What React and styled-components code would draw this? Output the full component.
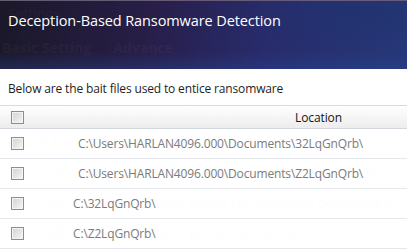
import React from "react";
import styled, { createGlobalStyle } from "styled-components";

const GlobalStyle = createGlobalStyle`
  html, body {
    margin: 0;
    padding: 0;
    background: #ffffff;
    overflow: hidden;
  }
  body {
    font-family: "Open Sans", "Noto Sans", sans-serif;
  }
`;

const baitFiles = [
  { path: "C:\\Users\\HARLAN4096.000\\Documents\\32LqGnQrb\\", indent: 54 },
  { path: "C:\\Users\\HARLAN4096.000\\Documents\\Z2LqGnQrb\\", indent: 54 },
  { path: "C:\\32LqGnQrb\\", indent: 49 },
  { path: "C:\\Z2LqGnQrb\\", indent: 49 },
];

const settings = [
  { label: "Enable advanced malware detection", extra: "Exclusions", extraAt: 300 },
  { section: "Anti-Ransomware Settings" },
  { label: "Enable behavioral-based ransomware detection" },
  { label: "Enable deception-based ransomware detection", extra: "Set up", extraAt: 350 },
  { label: "Enable document protection", extra: "Set up", extraAt: 260 },
];

/* ---------- settings window behind the dialog ---------- */

const Stage = styled.div`
  position: relative;
  width: 407px;
  height: 252px;
  overflow: hidden;
`;

const BackWindow = styled.div`
  display: flex;
  flex-direction: column;
  height: 100%;
`;

const BackHeader = styled.div`
  height: 69px;
  box-sizing: border-box;
  padding: 4px 2px 0;
  background: #1d1a2c;
  color: rgba(255, 255, 255, 0.7);
  display: flex;
  flex-direction: column;
  gap: 14px;
`;

const BackTitle = styled.div`
  padding-left: 6px;
  font-size: 14px;
  line-height: 20px;
`;

const BackTabs = styled.div`
  display: flex;
  gap: 22px;
  font-size: 14px;
  font-weight: 700;
  line-height: 20px;
`;

const BackBody = styled.div`
  flex: 1;
  background: #ffffff;
  padding-top: 28px;
  color: #c4c4c4;
`;

const BackRow = styled.div`
  height: 30px;
  display: flex;
  align-items: center;
  position: relative;
  padding-left: ${(p) => (p.$section ? "20px" : "50px")};
  font-size: ${(p) => (p.$section ? "15px" : "14px")};
  gap: 8px;
  white-space: nowrap;
`;

const BackExtra = styled.span`
  position: absolute;
  left: ${(p) => p.$at}px;
`;

const CheckIcon = () => (
  <svg width="13" height="13" viewBox="0 0 13 13">
    <rect x="0.5" y="0.5" width="12" height="12" fill="none" stroke="#c8c8c8" />
    <path d="M3 6.5 L5.5 9.5 L11 2" fill="none" stroke="#b8c8dc" strokeWidth="2" />
  </svg>
);

/* ---------- dialog ---------- */

const Dialog = styled.div`
  position: absolute;
  inset: 0;
  display: flex;
  flex-direction: column;
`;

const TitleBar = styled.div`
  height: 69px;
  box-sizing: border-box;
  padding: 10px 8px 0;
  border-top: 1px solid rgba(110, 96, 120, 0.9);
  background:
    radial-gradient(ellipse 120px 40px at 360px 12px, rgba(30, 50, 110, 0.6), transparent),
    linear-gradient(180deg, rgba(0, 0, 0, 0) 75%, rgba(40, 70, 150, 0.35) 100%),
    linear-gradient(100deg, rgba(27, 24, 40, 0.96) 0%, rgba(40, 30, 72, 0.96) 35%, rgba(40, 44, 110, 0.97) 65%, rgba(38, 56, 122, 0.98) 100%);
`;

const Title = styled.h1`
  margin: 0;
  font-size: 14.5px;
  font-weight: 400;
  line-height: 20px;
  color: #ffffff;
  letter-spacing: -0.1px;
`;

const Body = styled.div`
  flex: 1;
  background: rgba(255, 255, 255, 0.96);
`;

const Intro = styled.p`
  margin: 12px 0 8px 8px;
  font-size: 12px;
  line-height: 16px;
  color: #1e1e1e;
  letter-spacing: -0.15px;
`;

const Table = styled.div`
  display: flex;
  flex-direction: column;
  border-top: 1px solid #d6dbe1;
`;

const HeaderRow = styled.div`
  height: 22px;
  display: flex;
  align-items: center;
  padding-left: 11px;
  background: linear-gradient(180deg, rgba(255, 255, 255, 0.9) 0%, rgba(236, 236, 236, 0.98) 100%);
  border-bottom: 1px solid #d2d7dd;
`;

const HeaderLabel = styled.span`
  margin-left: 271px;
  font-size: 12px;
  color: #151515;
  letter-spacing: -0.1px;
`;

const Row = styled.div`
  height: 29px;
  display: flex;
  align-items: center;
  padding-left: 11px;
  border-bottom: 1px solid #e4e7eb;
`;

const Checkbox = styled.span`
  width: 13px;
  height: 13px;
  box-sizing: border-box;
  flex: none;
  border: 1px solid #8e8e8e;
  box-shadow: inset 0 0 0 1px #f4f4f4;
  background: linear-gradient(135deg, #d4d4d4 0%, #e6e6e6 55%, #f6f6f6 100%);
`;

const PathText = styled.span`
  margin-left: ${(p) => p.$indent}px;
  font-size: 12px;
  color: #7b7b7b;
  letter-spacing: -0.15px;
  white-space: nowrap;
`;

export default function App() {
  return (
    <>
      <GlobalStyle />
      <Stage>
        <BackWindow aria-hidden="true">
          <BackHeader>
            <BackTitle>Settings</BackTitle>
            <BackTabs>
              <span>Basic Setting</span>
              <span>Advance</span>
            </BackTabs>
          </BackHeader>
          <BackBody>
            {settings.map((s, i) =>
              s.section ? (
                <BackRow key={i} $section>
                  {s.section}
                </BackRow>
              ) : (
                <BackRow key={i}>
                  <CheckIcon />
                  <span>{s.label}</span>
                  {s.extra && <BackExtra $at={s.extraAt}>{s.extra}</BackExtra>}
                </BackRow>
              )
            )}
          </BackBody>
        </BackWindow>

        <Dialog>
          <TitleBar>
            <Title>Deception-Based Ransomware Detection</Title>
          </TitleBar>
          <Body>
            <Intro>Below are the bait files used to entice ransomware</Intro>
            <Table>
              <HeaderRow>
                <Checkbox />
                <HeaderLabel>Location</HeaderLabel>
              </HeaderRow>
              {baitFiles.map((f) => (
                <Row key={f.path}>
                  <Checkbox />
                  <PathText $indent={f.indent}>{f.path}</PathText>
                </Row>
              ))}
            </Table>
          </Body>
        </Dialog>
      </Stage>
    </>
  );
}
